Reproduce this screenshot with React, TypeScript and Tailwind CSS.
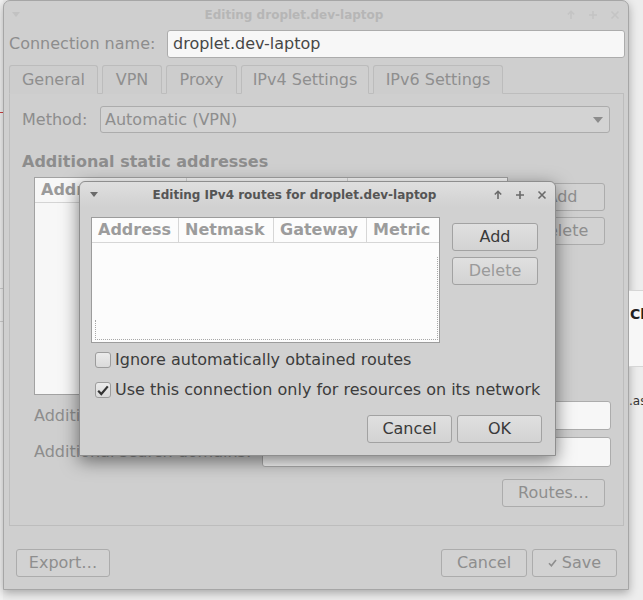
import React from "react";

const TitleIcons = ({ color }: { color: string }) => (
  <div className="flex items-center gap-[12px]">
    <svg width="10" height="10" viewBox="0 0 10 10">
      <path d="M5 9V1.5M1.8 4.5L5 1.3 8.2 4.5" stroke={color} strokeWidth="1.6" fill="none" />
    </svg>
    <svg width="10" height="10" viewBox="0 0 10 10">
      <path d="M5 1v8M1 5h8" stroke={color} strokeWidth="1.6" fill="none" />
    </svg>
    <svg width="10" height="10" viewBox="0 0 10 10">
      <path d="M1.5 1.5l7 7M8.5 1.5l-7 7" stroke={color} strokeWidth="1.6" fill="none" />
    </svg>
  </div>
);

const MenuArrow = ({ color }: { color: string }) => (
  <svg width="8" height="5" viewBox="0 0 8 5">
    <path d="M0 0h8L4 5z" fill={color} />
  </svg>
);

// dimmed button of the window behind the dialog
const DimButton = ({ className, children }: { className?: string; children: React.ReactNode }) => (
  <div
    className={`h-[28px] flex items-center justify-center border border-[#acacac] rounded-[3px] bg-[#d2d2d2] text-[16px] text-[#8e8e8e] ${className ?? ""}`}
  >
    {children}
  </div>
);

const Button = ({ className, disabled, children }: { className?: string; disabled?: boolean; children: React.ReactNode }) => (
  <div
    className={`h-[28px] flex items-center justify-center border border-[#a2a2a2] rounded-[3px] bg-gradient-to-b from-[#e0e0e0] to-[#d3d3d3] text-[16px] ${
      disabled ? "text-[#9a9a9a]" : "text-[#3a3a3a]"
    } ${className ?? ""}`}
  >
    {children}
  </div>
);

const Checkbox = ({ checked, label }: { checked?: boolean; label: string }) => (
  <div className="flex items-center h-[16px] gap-[4px]">
    <div className="w-[16px] h-[16px] border border-[#9c9c9c] rounded-[3px] bg-gradient-to-b from-[#ebebeb] to-[#dadada] flex items-center justify-center">
      {checked && (
        <svg width="12" height="11" viewBox="0 0 12 11">
          <path d="M1.2 5.8l3.1 3.2L10.8 1.4" stroke="#333" strokeWidth="2.2" fill="none" />
        </svg>
      )}
    </div>
    <span className="text-[16px] leading-[16px] text-[#3c3c3c] whitespace-nowrap">{label}</span>
  </div>
);

const tabs = [
  { label: "General", w: "w-[89px]" },
  { label: "VPN", w: "w-[60px]" },
  { label: "Proxy", w: "w-[71px]" },
  { label: "IPv4 Settings", w: "w-[128px]", active: true },
  { label: "IPv6 Settings", w: "w-[130px]" },
];

const routeColumns = [
  { label: "Address", w: "w-[87px]" },
  { label: "Netmask", w: "w-[95px]" },
  { label: "Gateway", w: "w-[93px]" },
  { label: "Metric", w: "flex-1" },
];

const ConnectionWindow = () => (
  <div className="w-[626px] h-[590px] shrink-0 border border-[#a6a6a6] rounded-t-[7px] bg-[#cfcfcf] shadow-[0_3px_10px_rgba(0,0,0,0.3)] flex flex-col">
    <div className="h-[27px] flex items-center">
      <div className="w-[25px] pl-[8px]">
        <MenuArrow color="#c2c2c2" />
      </div>
      <span className="flex-1 text-center text-[12px] font-bold text-[#b6b6b6] pr-[4px]">Editing droplet.dev-laptop</span>
      <div className="w-[65px] flex justify-end pr-[8px]">
        <TitleIcons color="#c4c4c4" />
      </div>
    </div>

    <div className="mt-[2px] h-[28px] flex items-center pl-[5px] pr-[3px]">
      <span className="text-[16px] text-[#8d8d8d]">Connection name:</span>
      <div className="ml-auto w-[458px] h-[28px] border border-[#acacac] rounded-[3px] bg-[#f7f7f7] pl-[5px] flex items-center text-[16px] text-[#474747]">
        droplet.dev-laptop
      </div>
    </div>

    <div className="mt-[7px] flex pl-[5px] gap-[4px] relative z-10 mb-[-1px]">
      {tabs.map((tab) => (
        <div
          key={tab.label}
          className={`${tab.w} h-[29px] flex items-center justify-center rounded-t-[3px] border border-[#bcbcbc] text-[16px] text-[#8f8f8f] whitespace-nowrap ${
            tab.active ? "border-b-[#cfcfcf] bg-[#cfcfcf]" : "border-b-transparent bg-[#cdcdcd]"
          }`}
        >
          {tab.label}
        </div>
      ))}
    </div>

    <div className="ml-[5px] w-[615px] h-[433px] border border-[#bdbdbd] flex flex-col pt-[12px]">
      <div className="h-[27px] flex items-center pl-[12px] pr-[13px]">
        <span className="text-[16px] text-[#8d8d8d]">Method:</span>
        <div className="ml-auto w-[510px] h-[27px] border border-[#acacac] rounded-[3px] bg-[#d3d3d3] flex items-center pl-[4px] pr-[6px] text-[16px] text-[#8e8e8e]">
          Automatic (VPN)
          <span className="ml-auto">
            <svg width="10" height="6" viewBox="0 0 10 6">
              <path d="M0 0h10L5 6z" fill="#8c8c8c" />
            </svg>
          </span>
        </div>
      </div>

      <div className="mt-[19px] pl-[12px] h-[19px] leading-[19px] text-[16px] font-bold text-[#8d8d8d]">
        Additional static addresses
      </div>

      <div className="mt-[6px] flex pl-[24px] pr-[18px]">
        <div className="w-[474px] h-[218px] border border-[#a2a2a2] bg-[#f7f7f7] flex flex-col">
          <div className="h-[25px] flex border-b border-[#d4d4d4] text-[16px] font-bold text-[#9a9a9a]">
            <div className="w-[152px] pl-[6px] flex items-center border-r border-[#d4d4d4]">Address</div>
            <div className="w-[161px] pl-[6px] flex items-center border-r border-[#d4d4d4]">Netmask</div>
            <div className="flex-1 pl-[6px] flex items-center">Gateway</div>
          </div>
        </div>
        <div className="ml-auto w-[86px] pt-[6px] flex flex-col gap-[6px]">
          <DimButton>Add</DimButton>
          <DimButton>Delete</DimButton>
        </div>
      </div>

      <div className="mt-[6px] h-[29px] flex items-center pl-[24px] pr-[12px]">
        <span className="text-[16px] text-[#8d8d8d]">Additional DNS servers:</span>
        <div className="ml-auto w-[349px] h-[29px] border border-[#acacac] rounded-[3px] bg-[#f7f7f7]" />
      </div>
      <div className="mt-[7px] h-[30px] flex items-center pl-[24px] pr-[12px]">
        <span className="text-[16px] text-[#8d8d8d]">Additional search domains:</span>
        <div className="ml-auto w-[349px] h-[30px] border border-[#acacac] rounded-[3px] bg-[#f7f7f7]" />
      </div>

      <div className="mt-[12px] flex justify-end pr-[18px]">
        <DimButton className="w-[103px]">Routes…</DimButton>
      </div>
    </div>

    <div className="mt-[23px] flex items-center pl-[12px] pr-[11px]">
      <DimButton className="w-[94px]">Export…</DimButton>
      <DimButton className="ml-auto w-[86px]">Cancel</DimButton>
      <DimButton className="ml-[5px] w-[85px] gap-[5px]">
        <svg width="9" height="8" viewBox="0 0 9 8">
          <path d="M1 4.2l2.4 2.5L8 1" stroke="#8e8e8e" strokeWidth="1.6" fill="none" />
        </svg>
        Save
      </DimButton>
    </div>
  </div>
);

const RoutesDialog = () => (
  <div className="absolute left-[79px] top-[181px] w-[477px] h-[275px] border border-[#8e8e8e] rounded-t-[6px] bg-[#d1d1d1] shadow-[0_5px_18px_rgba(0,0,0,0.5)] flex flex-col">
    <div className="h-[25px] rounded-t-[6px] bg-gradient-to-b from-[#dfdfdf] to-[#d1d1d1] flex items-center">
      <div className="w-[25px] pl-[10px]">
        <MenuArrow color="#6a6a6a" />
      </div>
      <span className="flex-1 text-center text-[12px] font-bold text-[#555555] pr-[6px]">Editing IPv4 routes for droplet.dev-laptop</span>
      <div className="w-[65px] flex justify-end pr-[8px]">
        <TitleIcons color="#6a6a6a" />
      </div>
    </div>

    <div className="pt-[10px] pl-[11px] flex">
      <div className="w-[349px] h-[126px] border border-[#9c9c9c] bg-[#fcfcfc] flex flex-col">
        <div className="h-[25px] flex border-b border-[#d6d6d6] text-[16px] font-bold text-[#9c9c9c]">
          {routeColumns.map((col, ind) => (
            <div
              key={col.label}
              className={`${col.w} pl-[6px] flex items-center ${ind < routeColumns.length - 1 ? "border-r border-[#d6d6d6]" : ""}`}
            >
              {col.label}
            </div>
          ))}
        </div>
        <div className="flex-1 relative">
          <div className="absolute left-[3px] right-[1px] top-[14px] bottom-[2px] border-r border-b border-dotted border-[#a8a8a8]" />
          <div className="absolute left-[3px] bottom-[2px] h-[20px] border-l border-dotted border-[#a8a8a8]" />
        </div>
      </div>
      <div className="ml-[12px] w-[86px] pt-[6px] flex flex-col gap-[6px]">
        <Button>Add</Button>
        <Button disabled>Delete</Button>
      </div>
    </div>

    <div className="mt-[9px] pl-[15px] flex flex-col gap-[14px]">
      <Checkbox label="Ignore automatically obtained routes" />
      <Checkbox checked label="Use this connection only for resources on its network" />
    </div>

    <div className="mt-[17px] flex justify-end gap-[5px] pr-[13px]">
      <Button className="w-[85px]">Cancel</Button>
      <Button className="w-[85px]">OK</Button>
    </div>
  </div>
);

const App = () => (
  <div className="relative w-[643px] h-[600px] overflow-hidden bg-[#ededed] flex font-['DejaVu_Sans',sans-serif]">
    <div className="w-[3px] shrink-0 bg-[#f2f2f2] flex flex-col overflow-hidden">
      <div className="mt-[112px] h-[1px] bg-[#d04040]" />
      <div className="mt-[175px] border-t border-[#cfcfcf]" />
      <div className="mt-[32px] border-t border-[#cfcfcf]" />
    </div>
    <ConnectionWindow />
    <div className="flex-1 overflow-hidden flex flex-col whitespace-nowrap">
      <div className="mt-[290px] border-t border-[#d6d6d6] bg-[#f7f7f7] h-[76px] pl-[1px] pt-[13px] text-[14px] font-bold text-[#222222]">
        Ch
      </div>
      <div className="border-t border-[#d6d6d6] pt-[25px] text-[12px] text-[#333333]">.as</div>
    </div>
    <RoutesDialog />
  </div>
);

export default App;
